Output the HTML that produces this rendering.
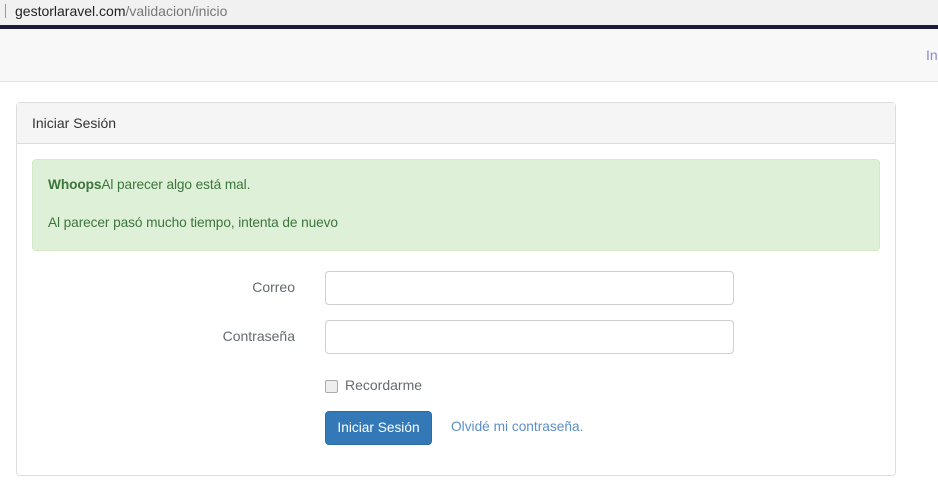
<!DOCTYPE html>
<html><head><meta charset="utf-8"><style>
*{box-sizing:border-box}
body{margin:0;width:938px;height:482px;overflow:hidden;background:#fff;font-family:"Liberation Sans",sans-serif;font-size:14px;color:#636b6f}
.url{position:absolute;left:0;top:0;width:938px;height:25px;background:#f1f1f1;font-size:14px}
.url .bar{position:absolute;left:5px;top:4px;width:1px;height:14px;background:#999}
.url span{position:absolute;left:15px;top:3px;color:#222}
.url span i{font-style:normal;color:#777}
.dark{position:absolute;left:0;top:25px;width:938px;height:4px;background:#1b1b3a}
.nav{position:absolute;left:0;top:29px;width:938px;height:53px;background:#f8f8f8;border-bottom:1px solid #e3e3e3}
.nav span{position:absolute;left:926px;top:18px;color:#8a8ad0}
.panel{position:absolute;left:16px;top:102px;width:880px;height:374px;border:1px solid #ddd;border-radius:4px}
.head{height:41px;background:#f5f5f5;border-bottom:1px solid #ddd;padding:12px 15px;color:#333}
.alert{position:absolute;left:15px;top:56px;width:848px;height:92px;background:#dff0d8;border:1px solid #d6e9c6;border-radius:4px;color:#3c763d;padding:17px 15px;font-size:13.7px;letter-spacing:-0.1px}
.alert p{margin:0 0 23px}
.lbl{position:absolute;width:278px;text-align:right;color:#636b6f}
.inp{position:absolute;left:308px;width:409px;height:34px;border:1px solid #ccd0d2;border-radius:4px;background:#fff}
.cb{position:absolute;left:308px;top:277px;width:13px;height:13px;border:1px solid #aaa;border-radius:2px;background:#eee}
.btn{position:absolute;left:308px;top:308px;width:107px;height:34px;background:#3379b7;border:1px solid #2d6ca2;border-radius:4px;color:#fff;text-align:center;line-height:32px;font-size:13.7px}
.lnk{position:absolute;left:434px;top:316px;color:#5a8fc8;font-size:13.7px}
</style></head><body>
<div class="url"><div class="bar"></div><span>gestorlaravel.com<i>/validacion/inicio</i></span></div>
<div class="dark"></div>
<div class="nav"><span>In</span></div>
<div class="panel">
<div class="head">Iniciar Sesión</div>
<div class="alert"><p><b>Whoops</b>Al parecer algo está mal.</p><p>Al parecer pasó mucho tiempo, intenta de nuevo</p></div>
<div class="lbl" style="top:176px">Correo</div>
<div class="inp" style="top:168px"></div>
<div class="lbl" style="top:225px">Contraseña</div>
<div class="inp" style="top:217px"></div>
<div class="cb"></div><div style="position:absolute;left:328px;top:274px;color:#636b6f">Recordarme</div>
<div class="btn">Iniciar Sesión</div>
<div class="lnk">Olvidé mi contraseña.</div>
</div>
</body></html>
